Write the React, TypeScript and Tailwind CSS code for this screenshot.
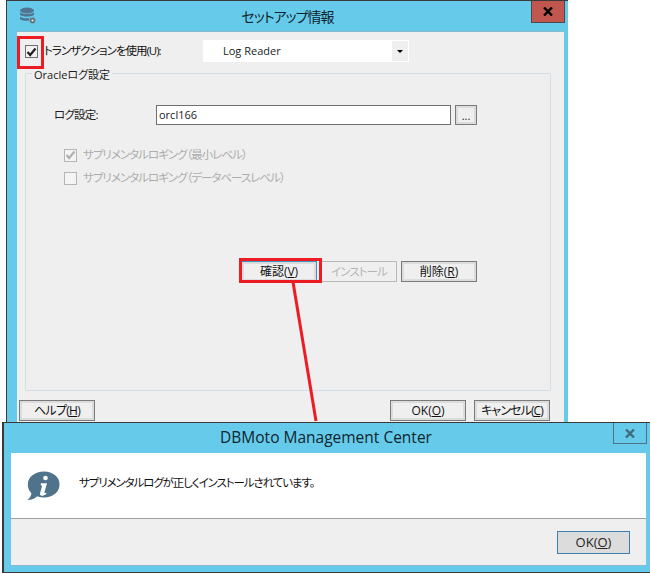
function Btn({ label, u, className = "", text = "text-[#111]" }: { label: string; u: string; className?: string; text?: string }) {
  return (
    <div className={`w-[76px] h-[21px] border border-[#7a7a7a] bg-[#dcdcdc] p-[2px] ${className}`}>
      <div className={`h-full bg-[#efefef] flex items-center justify-center whitespace-nowrap text-[12px] leading-none ${text}`}>
        {label}(<span className="underline">{u}</span>)
      </div>
    </div>
  );
}

function Box({ checked, disabled }: { checked?: boolean; disabled?: boolean }) {
  return (
    <div className={`w-[13px] h-[13px] border flex items-center justify-center ${disabled ? "border-[#b5b5b5] bg-[#f4f4f4]" : "border-[#6f6f6f] bg-[#f2f2f2]"}`}>
      {checked && (
        <svg width="11" height="10" viewBox="0 0 11 10">
          <path d="M1.5 5 L4.2 8 L9.5 1.5" fill="none" stroke={disabled ? "#b0b0b0" : "#222"} strokeWidth="2.2" />
        </svg>
      )}
    </div>
  );
}

function DbIcon() {
  return (
    <svg width="18" height="18" viewBox="0 0 18 18">
      <ellipse cx="8" cy="3.5" rx="7" ry="3" fill="#4f7590" />
      <path d="M1 5.2c1 2.4 13 2.4 14 0v2.6c-1 2.4-13 2.4-14 0z" fill="#4f7590" />
      <path d="M1 9.4c1 2.4 13 2.4 14 0v2.6c-1 2.4-13 2.4-14 0z" fill="#4f7590" />
      <circle cx="13.5" cy="13.5" r="3.2" fill="#5f6b72" stroke="#66cbea" strokeWidth="0.8" />
      <circle cx="13.5" cy="13.5" r="1.1" fill="#e8f4f8" />
    </svg>
  );
}

function InfoIcon() {
  return (
    <svg width="33" height="30" viewBox="0 0 33 30">
      <path d="M17 0.5C26 0.5 32.5 6 32.5 13.5S26 26.5 17 26.5c-2.5 0-4.8-.4-6.8-1.2C8 27.5 4.5 29 0.5 29c2.2-1.8 3.6-4 3.9-6.7C2 19.800 .8 17 .8 13.500 .8 6 8 .5 17 .5z" fill="#50738c" />
      <circle cx="18.500" cy="7" r="2.300" fill="#fff" />
      <path d="M14 12.200h6l-2.600 9.300c-.2.800.4 1 1.800.3l.3.9c-2 1.500-3.200 2-4.500 2-1.700 0-2.300-1-1.900-2.500l1.800-6.800c.2-.9-.3-1.200-1.300-1.200z" fill="#fff" />
    </svg>
  );
}

function Dialog1() {
  return (
    <div className="absolute left-[6px] top-0 w-[562px] h-[424px] bg-[#66cbea] border-l border-t border-[#3a3a3a] flex flex-col">
      <div className="h-[30px] relative flex items-center justify-center shrink-0">
        <div className="absolute left-[12px] top-[6px]"><DbIcon /></div>
        <span className="text-[14px] text-[#10242e] tracking-[-1px]">セットアップ情報</span>
        <div className="absolute right-[3px] top-0 w-[34px] h-[22px] bg-[#c0564e] border border-t-0 border-[#4a4a4a] flex items-center justify-center">
          <svg width="10" height="9" viewBox="0 0 10 9"><path d="M1 0.500 L9 8.500 M9 0.500 L1 8.500" stroke="#000" strokeWidth="2.400" /></svg>
        </div>
      </div>
      <div className="ml-[10px] mr-[4px] h-[392px] bg-[#efefef] border-t border-[#8ab8cc] flex flex-col px-[8px]">
        <div className="h-[41px] flex items-start shrink-0 pt-[8px]">
          <div className="pt-[5px]"><Box checked /></div>
          <span className="ml-[6px] mt-[3px] text-[11.5px] leading-[15px] text-[#111] w-[159px] whitespace-nowrap tracking-[-1px]">トランザクションを使用(U):</span>
          <div className="h-[22px] w-[206px] bg-white flex items-center relative">
            <span className="ml-[20px] text-[11px] text-[#222]">Log Reader</span>
            <div className="absolute right-[1px] top-[1px] bottom-[1px] w-[16px] bg-[#efefef] flex items-center justify-center">
              <div className="w-0 h-0 border-l-[3px] border-r-[3px] border-t-[3px] border-l-transparent border-r-transparent border-t-black" />
            </div>
          </div>
        </div>
        <div className="relative h-[318px] w-[526px] border border-[#d3dde4] rounded-[2px] flex flex-col">
          <span className="absolute left-[6px] top-[-7px] bg-[#efefef] px-[2px] text-[11px] leading-[15px] text-[#222]">Oracleログ設定</span>
          <div className="mt-[31px] flex items-center h-[20px] pl-[28px]">
            <span className="w-[102px] text-[11.5px] text-[#222] tracking-[-0.8px]">ログ設定:</span>
            <div className="w-[295px] h-[20px] border border-[#707070] bg-white flex items-center pl-[2px] text-[11px] text-[#222]">orcl166</div>
            <div className="ml-[4px] w-[22px] h-[20px] border border-[#7a7a7a] bg-[#dcdcdc] p-[2px]">
              <div className="h-full bg-[#efefef] flex items-center justify-center text-[11px] leading-none text-[#222]">...</div>
            </div>
          </div>
          <div className="mt-[23px] ml-[38px] flex items-center gap-[6px] h-[14px]">
            <Box checked disabled />
            <span className="text-[11.5px] leading-none text-[#adadad] tracking-[-1px]">サプリメンタルロギング（最小レベル）</span>
          </div>
          <div className="mt-[9px] ml-[38px] flex items-center gap-[6px] h-[14px]">
            <Box disabled />
            <span className="text-[11.5px] leading-none text-[#adadad] tracking-[-1px]">サプリメンタルロギング（データベースレベル）</span>
          </div>
          <div className="mt-[76px] ml-[215px] flex gap-[4px]">
            <div className="w-[76px] h-[21px] border border-[#3f8fc0] bg-[#dcdcdc] p-[2px]">
              <div className="h-full bg-[#efefef] flex items-center justify-center text-[12px] leading-none text-[#111]">確認(<span className="underline">V</span>)</div>
            </div>
            <div className="w-[76px] h-[21px] border border-[#b8b8b8] bg-[#efefef] flex items-center justify-center text-[11.5px] leading-none text-[#b4b4b4] tracking-[-0.9px]">インストール</div>
            <Btn label="削除" u="R" />
          </div>
        </div>
        <div className="mt-[9px] -ml-[6px] flex w-[531px]">
          <Btn label="ヘルプ" u="H" text="text-[#111] tracking-[-0.7px]" />
          <Btn label="OK" u="O" className="ml-[295px]" />
          <Btn label="キャンセル" u="C" className="ml-[8px]" text="text-[#111] tracking-[-0.9px]" />
        </div>
      </div>
    </div>
  );
}

function Dialog2() {
  return (
    <div className="absolute left-[2px] top-[422px] w-[648px] h-[151px] bg-[#66cbea] border-l-2 border-t border-b border-[#3a3a3a] flex flex-col">
      <div className="h-[30px] shrink-0 relative flex items-center justify-center">
        <span className="text-[15.5px] text-[#10242e] pr-[2px]">DBMoto Management Center</span>
        <div className="absolute right-[3px] top-0 w-[34px] h-[21px] border border-t-0 border-[#4d7285] flex items-center justify-center">
          <svg width="10" height="9" viewBox="0 0 10 9"><path d="M1 0.500 L9 8.500 M9 0.500 L1 8.500" stroke="#3d6c80" strokeWidth="2.400" /></svg>
        </div>
      </div>
      <div className="ml-[7px] mr-[4px] flex flex-col h-[113px]">
        <div className="h-[66px] bg-white border-b border-[#a0a0a0] flex items-center pl-[16px]">
          <InfoIcon />
          <span className="ml-[19px] mb-[6px] text-[11.5px] leading-none text-[#111] tracking-[-1.1px]">サプリメンタルログが正しくインストールされています。</span>
        </div>
        <div className="flex-1 bg-[#efefef] border-b border-[#8ab8cc] flex items-start justify-end pr-[16px] pt-[12px]">
          <div className="w-[73px] h-[23px] border border-[#3f7fae] bg-[#dcdcdc] flex items-center justify-center text-[13px] leading-none text-[#222]">OK(<span className="underline">O</span>)</div>
        </div>
      </div>
    </div>
  );
}

export default function App() {
  return (
    <div
      className="relative w-[650px] h-[573px] bg-white overflow-hidden [font-feature-settings:'palt']"
      style={{ fontFamily: "'Open Sans','Noto Sans CJK JP',sans-serif" }}
    >
      <Dialog1 />
      <Dialog2 />
      <div className="absolute left-[17px] top-[36px] w-[27px] h-[33px] border-[3px] border-[#ed1c24]" />
      <div className="absolute left-[239px] top-[258px] w-[83px] h-[25px] border-[3px] border-[#ed1c24]" />
      <svg className="absolute left-0 top-0" width="650" height="573" style={{ pointerEvents: "none" }}>
        <line x1="293" y1="282" x2="316" y2="421" stroke="#ed1c24" strokeWidth="3" />
      </svg>
    </div>
  );
}
